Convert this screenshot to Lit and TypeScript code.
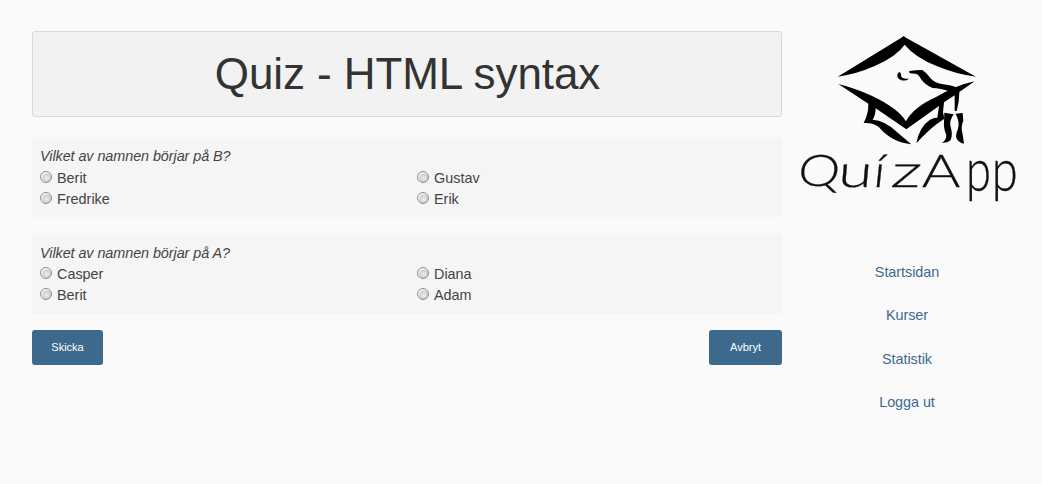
import { LitElement, html, css } from "lit";
import { customElement } from "lit/decorators.js";

const questions = [
  { text: "Vilket av namnen börjar på B?", options: ["Berit", "Gustav", "Fredrike", "Erik"] },
  { text: "Vilket av namnen börjar på A?", options: ["Casper", "Diana", "Berit", "Adam"] },
];
const links = ["Startsidan", "Kurser", "Statistik", "Logga ut"];

@customElement("quiz-logo")
export class QuizLogo extends LitElement {
  static styles = css`
    :host { display: block; width: 240px; height: 190px; }
    svg { display: block; width: 240px; height: 190px; }
    .word { font-family: Lato, sans-serif; font-weight: 300; font-size: 136px; fill: #111; stroke: #111; stroke-width: 0.8px; }
  `;
  render() {
    return html`<svg viewBox="0 0 720 570" aria-label="QuizApp">
      <path d="M143 155 L334 38 L341 33 L348 38 L558 155 Q500 148 440 123 Q375 97 344 59 Q320 94 254 123 Q200 147 143 155Z" />
      <path d="M145 177 Q190 188 245 212 Q325 250 348 289 Q370 247 437 217 Q500 180 554 169 L508 201 Q508 230 500 258 L494 258 L494 211 L462 232 L459 262 L463 281 Q420 308 379 355 Q388 305 420 284 Q432 277 442 278 L447 243 L349 313 L257 250 Q257 270 248 284 Q285 287 317 318 Q350 346 364 358 Q305 352 267 307 Q250 292 221 294 Q236 265 235 236Z" />
      <path d="M358 138 Q376 135 397 135 Q410 143 421 159 Q434 174 455 177 Q485 180 505 190 L480 200 Q450 189 428 189 Q405 180 393 162 Q386 147 376 146 Q365 146 358 144Z" />
      <path d="M330 141 Q335 148 334 155 Q340 162 357 161 Q348 169 334 166 Q320 160 322 149 Q324 142 330 141Z" />
      <path d="M463 263 L491 268 Q477 287 482 306 Q489 330 482 345 Q473 355 456 353 Q470 345 469 330 Q460 310 462 292Z" />
      <path d="M497 266 L518 264 L520 287 Q512 305 517 323 Q520 340 522 356 Q502 351 498 335 Q498 324 504 311 Q510 292 497 266Z" />
      <g class="word">
        <text transform="translate(20 483) skewX(-6) scale(1.17 .96)">Q</text>
        <text transform="translate(142 486) skewX(-5) scale(1.37 1)">u</text>
        <text transform="translate(247 486) skewX(-6) scale(1.15 1)">í</text>
        <text transform="translate(300 487) skewX(-6) scale(1.5 1)">z</text>
        <text transform="translate(395 487) scale(1.3 1)">A</text>
        <text transform="translate(528 498) scale(1 1.3)">p</text>
        <text transform="translate(605 498) scale(1.04 1.3)">p</text>
      </g>
    </svg>`;
  }
}

@customElement("app-root")
export class AppRoot extends LitElement {
  static styles = css`
    :host {
      display: flex; box-sizing: border-box; height: 484px; padding: 0 12px 0 32px; gap: 8px;
      background: #fafafa; color: #444; font: 14.4px/21px "Liberation Sans", Arial, sans-serif;
    }
    main { width: 750px; padding-top: 31px; }
    h1 {
      box-sizing: border-box; height: 86px; margin: 0 0 20px; padding-left: 1px; border: 1px solid #d9d9d9; border-radius: 3px;
      background: #f2f2f2; color: #333; font-size: 44px; font-weight: 400; line-height: 84px; letter-spacing: -0.1px; text-align: center;
    }
    .question { box-sizing: border-box; height: 80px; margin-bottom: 16px; padding: 9px 8px 0; border-radius: 3px; background: #f5f5f5; }
    .question + .question { height: 81px; }
    .prompt { font-style: italic; letter-spacing: -0.07px; }
    .question + .question .prompt { line-height: 22px; height: 21px; }
    .options { display: grid; grid-template-columns: 377px 1fr; }
    label { display: flex; height: 21px; gap: 5px; line-height: 22px; }
    input {
      appearance: none; box-sizing: border-box; width: 12px; height: 12px; margin: 4px 0 0; border: 1px solid #8f8f8f; border-radius: 50%;
      background: radial-gradient(circle at 58% 60%, #eee 0, #d0d2d5 42%, #c4c6c8 46%, #f2f2f2 58%, #f2f2f2 100%);
    }
    .actions { display: flex; justify-content: space-between; }
    button {
      height: 35px; padding: 0; border: 0; border-radius: 3px; background: #3d698d; color: #fff;
      font: 11px/33px "Liberation Sans", Arial, sans-serif;
    }
    .send { width: 71px; }
    .cancel { width: 73px; }
    aside { width: 240px; padding-top: 25px; }
    nav { display: flex; flex-direction: column; align-items: center; gap: 22.4px; width: 234px; padding-top: 47px; letter-spacing: -0.05px; }
    a { color: #3d698d; text-decoration: none; }
  `;
  render() {
    return html`
      <main>
        <h1>Quiz - HTML syntax</h1>
        ${questions.map((q, i) => html`<section class="question">
          <div class="prompt">${q.text}</div>
          <div class="options">${q.options.map((o) => html`<label><input type="radio" name="q${i}" />${o}</label>`)}</div>
        </section>`)}
        <div class="actions"><button class="send">Skicka</button><button class="cancel">Avbryt</button></div>
      </main>
      <aside>
        <quiz-logo></quiz-logo>
        <nav>${links.map((l) => html`<a href="#">${l}</a>`)}</nav>
      </aside>`;
  }
}
